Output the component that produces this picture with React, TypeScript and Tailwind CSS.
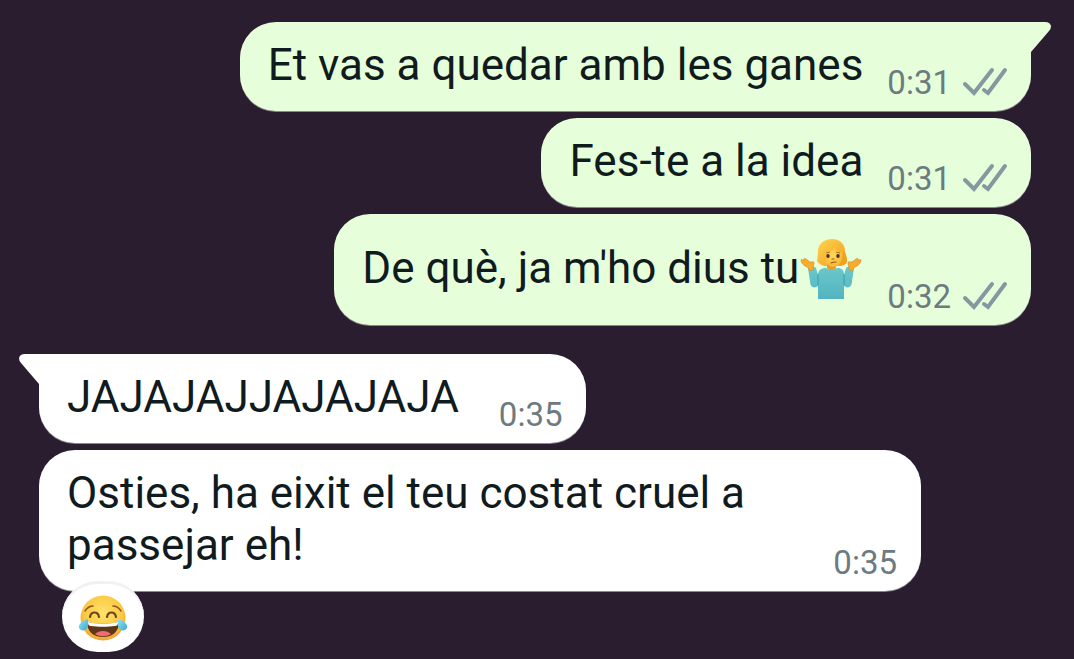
import type { ReactNode } from 'react';
import clsx from 'clsx';

function ShrugEmoji() {
  return (
    <svg role="img" aria-label="🤷‍♀️" viewBox="-2 -7 64 74" className="inline-block h-[74px] w-16 align-[-22px]">
      <defs>
        <linearGradient id="shrug-hair" x1="0" y1="0" x2="1" y2="1">
          <stop offset="0" stopColor="#ffd450" />
          <stop offset="1" stopColor="#efa01e" />
        </linearGradient>
        <radialGradient id="shrug-face" cx=".5" cy=".45" r=".6">
          <stop offset="0" stopColor="#ffd95a" />
          <stop offset="1" stopColor="#f6b133" />
        </radialGradient>
        <linearGradient id="shrug-top" x1="0" y1="0" x2="0" y2="1">
          <stop offset="0" stopColor="#6ac8cd" />
          <stop offset="1" stopColor="#53b4bf" />
        </linearGradient>
      </defs>
      <path d="M31 1c-8 0-14 5-14 12 0 4-1 7 0 10 1 3 4 5 7 5h14c4 0 8-2 8-6 0-3-2-5-2-9C44 6 39 1 31 1Z" fill="url(#shrug-hair)" />
      <path
        d="M7 30c2-2 6-2 8 0l2 7c0-4 2-6 6-7h2c3 2 8 2 11 0h2c4 1 5 3 5 7l2-7c2-2 6-2 8 0l-2 13c0 6-4 8-8 5v13H17V48c-4 3-8 1-8-5Z"
        fill="url(#shrug-top)"
      />
      <path d="M17 47V36M43 47V36" stroke="#3d9ba7" fill="none" />
      <path d="M26 26h9v4c-2 3-7 3-9 0Z" fill="#e99b28" />
      <path d="M22 13c5 0 10-2 12-5 1 3 4 5 8 7 0 9-5 14-10 14s-11-6-10-16Z" fill="url(#shrug-face)" />
      <path d="M17 14C17 6 24 2 31 2s13 4 13 13c-5 0-8-2-10-6-3 4-7 5-10 6 0 4 0 7 1 11-4 1-8-1-9-3 1-3 1-5 1-9Z" fill="url(#shrug-hair)" />
      <path d="M42 14c0 5-1 9-4 13 4 1 8-1 8-4 0-4-1-6-2-9Z" fill="#eea222" />
      <path d="M25 15l4-1M35 14l4 1" stroke="#a96b20" strokeWidth="1" fill="none" />
      <ellipse cx="27" cy="18" rx="1.7" ry="2" fill="#4c2f1c" />
      <ellipse cx="37" cy="18" rx="1.7" ry="2" fill="#4c2f1c" />
      <path d="M31 21h2M30 25q2-1 5-1" stroke="#9b551d" strokeWidth="1.1" fill="none" strokeLinecap="round" />
      <path d="M8 32c0-2-2-3-4-4-3-2-4-4-4-6 0-1 2 0 3 1-1-2 0-3 2-2l4 3c2 0 4-1 4 1s-1 3-1 6c-1 2-3 2-4 1Z" fill="#f6ad2d" stroke="#d98420" strokeWidth=".6" />
      <path d="M52 32c0-2 2-3 4-4 3-2 4-4 4-6 0-1-2 0-3 1 1-2 0-3-2-2l-4 3c-2 0-4-1-4 1s1 3 1 6c1 2 3 2 4 1Z" fill="#f6ad2d" stroke="#d98420" strokeWidth=".6" />
    </svg>
  );
}

function JoyEmoji() {
  return (
    <svg role="img" aria-label="😂" viewBox="0 -1 50 50" className="h-[50px] w-[50px]">
      <defs>
        <radialGradient id="joy-face" cx=".5" cy=".4" r=".6">
          <stop offset="0" stopColor="#ffe36a" />
          <stop offset=".7" stopColor="#fcc944" />
          <stop offset="1" stopColor="#f0a033" />
        </radialGradient>
        <linearGradient id="joy-tear" x1="0" y1="0" x2="1" y2="1">
          <stop offset="0" stopColor="#8ee7f3" />
          <stop offset="1" stopColor="#38a9d3" />
        </linearGradient>
      </defs>
      <circle cx="25" cy="25" r="22.5" fill="url(#joy-face)" />
      <path d="M7 18c2-3 4-5 8-5M35 13c4 0 6 2 8 5" stroke="#8b5420" strokeWidth="1.5" fill="none" strokeLinecap="round" />
      <path d="M12 24c1-6 8-6 9 0M29 24c1-6 8-6 9 0" stroke="#70441d" strokeWidth="2.2" fill="none" strokeLinecap="round" />
      <path d="M9 29c9 2 23 2 32 0 0 9-6 15-16 15S9 38 9 29Z" fill="#5e3718" />
      <path d="M10 29c9 2 21 2 30 0 0 3-1 4-3 4-7 1-17 1-24 0-2 0-3-1-3-4Z" fill="#fff" />
      <path d="M17 41c4-4 12-4 16 0-5 3-11 3-16 0Z" fill="#ef6c72" />
      <path d="M10 26C5 27 0 31 1 35c2 4 8 3 9-2Z" fill="url(#joy-tear)" />
      <path d="M40 26c5 1 10 5 9 9-2 4-8 3-9-2Z" fill="url(#joy-tear)" />
    </svg>
  );
}

function DoubleCheck() {
  return (
    <svg role="img" aria-label="Entregat" viewBox="0 0 44 28" className="h-7 w-11 shrink-0 overflow-visible" fill="none" stroke="#8498a0" strokeWidth="4">
      <path d="M2 15l9 9L29 1" strokeLinecap="round" />
      <path d="M21 21l4 3L42 1" strokeLinecap="round" />
    </svg>
  );
}

type MessageProps = {
  children: ReactNode;
  time: string;
  sent?: boolean;
  tail?: boolean;
  reaction?: ReactNode;
};

function Message({ children, time, sent, tail, reaction }: MessageProps) {
  return (
    <li
      className={clsx(
        'relative flex w-fit max-w-[882px] items-end rounded-[36px] pt-[17px] pr-6 pb-2 pl-7 shadow-[0_1px_0_#8b858d]',
        sent ? 'gap-6 self-end bg-[#e6ffda]' : 'gap-10 bg-white',
        tail && (sent ? 'rounded-tr-none' : 'rounded-tl-none'),
      )}
    >
      {tail && (
        <svg
          viewBox="0 0 20 30"
          aria-hidden="true"
          className={clsx('absolute top-0 h-[30px] w-5', sent ? 'left-full fill-[#e6ffda]' : 'right-full -scale-x-100 fill-white')}
        >
          <path d="M0 0h14q5 0 6 4 0 3-2 5L0 30Z" />
        </svg>
      )}
      <p className="min-w-0 pb-3 text-[44px] leading-[52px] text-[#101b20]">{children}</p>
      <div className="flex shrink-0 items-center gap-3 text-[33px] leading-10 text-[#6c7b80]">
        <time>{time}</time>
        {sent && <DoubleCheck />}
      </div>
      {reaction && (
        <button
          type="button"
          className="absolute -bottom-[61px] left-[23px] flex h-[71px] w-[82px] items-center justify-center rounded-[36px] bg-white shadow-[inset_0_3px_0_#f1f1f2]"
        >
          {reaction}
        </button>
      )}
    </li>
  );
}

export default function App() {
  return (
    <main className="min-h-screen bg-[#2a1d30] pt-[22px] pr-[43px] pb-[67px] pl-[39px] font-[Roboto,sans-serif]">
      <ul className="flex flex-col gap-[7px]">
        <Message sent tail time="0:31">Et vas a quedar amb les ganes</Message>
        <Message sent time="0:31">Fes-te a la idea</Message>
        <Message sent time="0:32">
          De què, ja m'ho dius tu
          <ShrugEmoji />
        </Message>
        <li aria-hidden="true" className="h-[15px]" />
        <Message tail time="0:35">JAJAJAJJAJAJAJA</Message>
        <Message time="0:35" reaction={<JoyEmoji />}>
          Osties, ha eixit el teu costat cruel a passejar eh!
        </Message>
      </ul>
    </main>
  );
}
